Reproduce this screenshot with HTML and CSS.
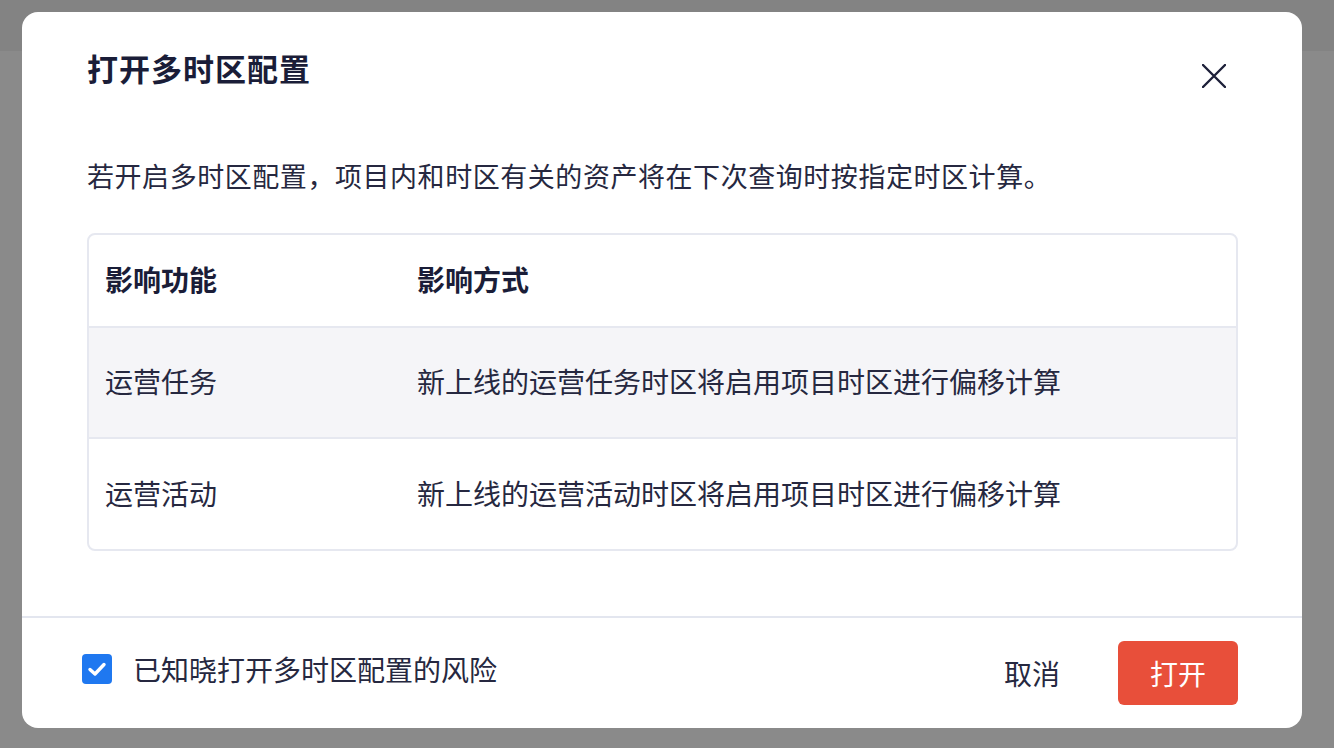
FILE: index.html
```html
<!DOCTYPE html>
<html lang="zh-CN">
	<head>
		<meta charset="UTF-8" />
		<meta name="viewport" content="width=device-width, initial-scale=1.0" />
		<title>打开多时区配置</title>
		<link rel="stylesheet" href="styles.css">
	</head>
	<body>
		<div class="topbar"></div>
		<div class="modal">
			<div class="modal-header">
				<h1>打开多时区配置</h1>
				<button class="close" aria-label="关闭">
					<svg width="24" height="24" viewBox="0 0 24 24">
						<path d="M1 1 L23 23 M23 1 L1 23" stroke="#1d2039" stroke-width="2.4" stroke-linecap="round" fill="none" />
					</svg>
				</button>
			</div>
			<p class="desc">若开启多时区配置，项目内和时区有关的资产将在下次查询时按指定时区计算。</p>
			<div class="table">
				<div class="row head">
					<div class="col-name">影响功能</div>
					<div class="col-way">影响方式</div>
				</div>
				<div class="row shaded">
					<div class="col-name">运营任务</div>
					<div class="col-way">新上线的运营任务时区将启用项目时区进行偏移计算</div>
				</div>
				<div class="row last">
					<div class="col-name">运营活动</div>
					<div class="col-way">新上线的运营活动时区将启用项目时区进行偏移计算</div>
				</div>
			</div>
			<div class="modal-footer">
				<label class="confirm">
					<span class="checkbox">
						<svg width="30" height="30" viewBox="0 0 30 30">
							<rect x="0" y="0" width="30" height="30" rx="4" fill="#1f78f0" />
							<path d="M8 15.5 L13 20 L22 10.5" stroke="#fff" stroke-width="3.4" stroke-linecap="round" stroke-linejoin="round" fill="none" />
						</svg>
					</span>
					已知晓打开多时区配置的风险
				</label>
				<div class="actions">
					<button class="cancel">取消</button>
					<button class="primary">打开</button>
				</div>
			</div>
		</div>
	</body>
</html>
```

FILE: styles.css
```css
* {
	box-sizing: border-box;
}
body {
	margin: 0;
	height: 748px;
	overflow: hidden;
	background-color: #8a8a8a;
	font-family: "Noto Sans CJK SC", "Noto Sans", sans-serif;
	color: #262840;
	position: relative;
}
.topbar {
	height: 51px;
	background-color: #838383;
}
.modal {
	position: absolute;
	top: 12px;
	left: 22px;
	width: 1280px;
	height: 716px;
	background-color: #fff;
	border-radius: 16px;
	display: flex;
	flex-direction: column;
}
.modal-header {
	display: flex;
	justify-content: space-between;
	align-items: flex-start;
	padding: 36px 76px 0 65px;
}
h1 {
	margin: 0;
	font-size: 31px;
	line-height: 40px;
	font-weight: bold;
	color: #1a1d38;
	letter-spacing: 1px;
}
.close {
	border: none;
	background: none;
	padding: 0;
	margin-top: 16px;
	width: 24px;
	height: 24px;
	cursor: pointer;
}
.close svg {
	display: block;
}
.desc {
	margin: 68px 64px 0 65px;
	font-size: 27px;
	letter-spacing: 0.55px;
	line-height: 40px;
}
.table {
	margin: 37px 64px 0 65px;
	border: 2px solid #e6e8f0;
	border-radius: 8px;
	overflow: hidden;
}
.row {
	display: flex;
	align-items: center;
	height: 111px;
	font-size: 28px;
	line-height: 36px;
	padding-bottom: 3px;
	border-bottom: 2px solid #e6e8f0;
}
.row.head {
	height: 93px;
	font-weight: bold;
	color: #1a1d38;
}
.row.shaded {
	background-color: #f5f5f8;
}
.row.last {
	border-bottom: none;
	height: 110px;
}
.col-name {
	width: 328px;
	padding-left: 16px;
}
.col-way {
	flex: 1;
}
.modal-footer {
	margin-top: 65px;
	border-top: 2px solid #e3e6ef;
	display: flex;
	justify-content: space-between;
	align-items: center;
	padding: 23px 64px 23px 60px;
}
.confirm {
	display: flex;
	align-items: center;
	gap: 21px;
	font-size: 28px;
	margin-top: -8px;
	cursor: pointer;
}
.checkbox svg {
	display: block;
}
.actions {
	display: flex;
	align-items: center;
	gap: 58px;
}
.cancel {
	border: none;
	background: none;
	padding: 0;
	font-family: inherit;
	font-size: 28px;
	color: #262840;
	cursor: pointer;
}
.primary {
	width: 120px;
	height: 64px;
	border: none;
	border-radius: 6px;
	background-color: #e84f3a;
	color: #fff;
	font-family: inherit;
	font-size: 28px;
	cursor: pointer;
}
```
